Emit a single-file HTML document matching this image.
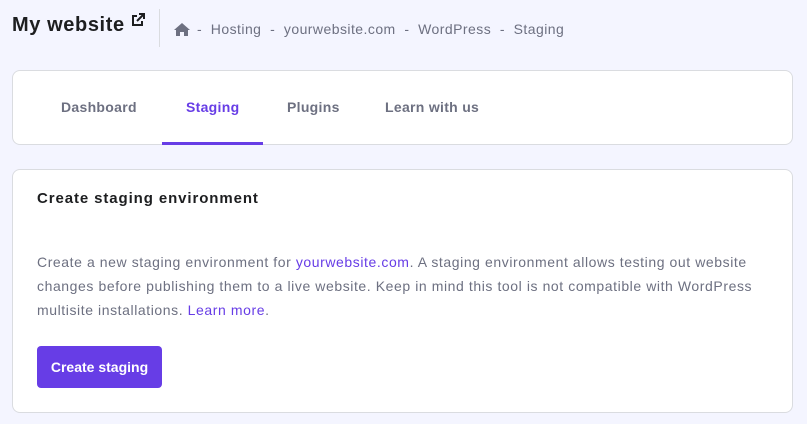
<!DOCTYPE html>
<html><head><meta charset="utf-8"><style>
*{margin:0;padding:0;box-sizing:border-box}
body{width:807px;height:424px;background:#f4f5ff;font-family:"Liberation Sans",sans-serif;position:relative;overflow:hidden}
.t{position:absolute;white-space:nowrap}
.card{position:absolute;left:12px;width:781px;background:#fff;border:1px solid #dadce0;border-radius:8px}
.p{color:#6d7081;font-size:14px;left:37px;letter-spacing:0.58px}
a{color:#673de6;text-decoration:none}
.tab{position:absolute;top:99px;font-size:14px;font-weight:bold;color:#6d7081;letter-spacing:0.3px}
</style></head><body>
<div class="t" style="left:12px;top:14px;font-size:20px;font-weight:bold;color:#1d1e20;letter-spacing:0.6px">My website</div>
<svg class="t" style="left:131px;top:13px" width="14" height="14" viewBox="0 0 14 14"><path d="M6 3H2v9h9V8" fill="none" stroke="#1d1e20" stroke-width="2"/><path d="M8 1h5v5M13 1L6 8" fill="none" stroke="#1d1e20" stroke-width="2"/></svg>
<div class="t" style="left:159px;top:9px;width:1px;height:38px;background:#dadce0"></div>
<svg class="t" style="left:174px;top:23px" width="16" height="13" viewBox="0 0 16 13"><path d="M8 0L0 7h2v6h4V9h4v4h4V7h2z" fill="#6d7081"/></svg>
<div class="t" style="left:197px;top:21px;font-size:14px;color:#6d7081;letter-spacing:0.45px">-&nbsp; Hosting &nbsp;-&nbsp; yourwebsite.com &nbsp;-&nbsp; WordPress &nbsp;-&nbsp; Staging</div>
<div class="card" style="top:70px;height:75px"></div>
<div class="tab" style="left:61px">Dashboard</div>
<div class="tab" style="left:186px;color:#673de6">Staging</div>
<div class="tab" style="left:287px">Plugins</div>
<div class="tab" style="left:385px">Learn with us</div>
<div class="t" style="left:162px;top:142px;width:101px;height:3px;background:#673de6"></div>
<div class="card" style="top:169px;height:244px"></div>
<div class="t" style="left:37px;top:190px;font-size:15px;font-weight:bold;color:#1d1e20;letter-spacing:0.9px">Create staging environment</div>
<div class="t p" style="top:254px">Create a new staging environment for <a>yourwebsite.com</a>. A staging environment allows testing out website</div>
<div class="t p" style="top:278px">changes before publishing them to a live website. Keep in mind this tool is not compatible with WordPress</div>
<div class="t p" style="top:302px">multisite installations. <a>Learn more</a>.</div>
<div class="t" style="left:37px;top:346px;width:125px;height:42px;background:#673de6;border-radius:4px;color:#fff;font-weight:bold;font-size:14px;line-height:42px;text-align:center">Create staging</div>
</body></html>
